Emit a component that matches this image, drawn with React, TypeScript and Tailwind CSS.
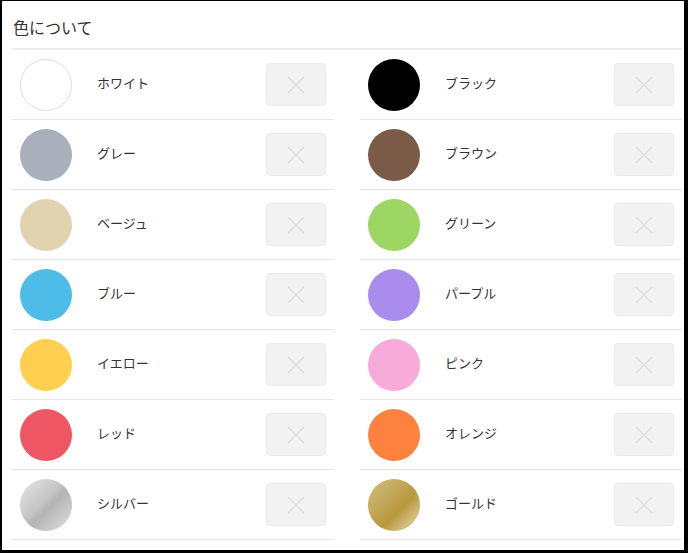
const colors = [
  { name: "ホワイト", swatch: "bg-white border border-[#dddddd]" },
  { name: "ブラック", swatch: "bg-black" },
  { name: "グレー", swatch: "bg-[#a9b0bc]" },
  { name: "ブラウン", swatch: "bg-[#7b5a48]" },
  { name: "ベージュ", swatch: "bg-[#e1d3b0]" },
  { name: "グリーン", swatch: "bg-[#9dd662]" },
  { name: "ブルー", swatch: "bg-[#4dbce9]" },
  { name: "パープル", swatch: "bg-[#a98cee]" },
  { name: "イエロー", swatch: "bg-[#ffd04f]" },
  { name: "ピンク", swatch: "bg-[#f8abd9]" },
  { name: "レッド", swatch: "bg-[#ef5664]" },
  { name: "オレンジ", swatch: "bg-[#fd823f]" },
  {
    name: "シルバー",
    swatch: "bg-[linear-gradient(135deg,#e6e6e6_0%,#c4c4c4_45%,#b3b3b3_55%,#e2e2e2_100%)]",
  },
  {
    name: "ゴールド",
    swatch: "bg-[linear-gradient(135deg,#d3bf7f_0%,#bea250_45%,#b8983c_60%,#ece1be_100%)]",
  },
];

const CloseBox = () => (
  <div className="w-[60px] h-[43px] rounded-[4px] bg-[#f2f2f2] border border-[#ebebeb] flex items-center justify-center">
    <svg width="18" height="18" viewBox="0 0 18 18" fill="none">
      <path d="M1 1L17 17M17 1L1 17" stroke="#dcdcdc" strokeWidth="1.2" />
    </svg>
  </div>
);

export default function App() {
  return (
    <div
      className="w-[688px] h-[553px] bg-white border-black border-t border-l-2 border-r-4 border-b-[3px] pl-[10px] pr-[2px] text-[#333]"
      style={{ fontFamily: '"Noto Sans CJK JP", "Noto Sans", sans-serif' }}
    >
      <div className="h-[47px] flex items-center pl-[1px] pt-[4px] text-[16px]">色について</div>
      <div className="border-t-2 border-[#ececec] grid grid-cols-2 gap-x-[26px]">
        {colors.map((c) => (
          <div
            key={c.name}
            className="h-[70px] border-b border-[#e6e6e6] flex items-center pl-[8px] pr-[8px]"
          >
            <div className={`w-[52px] h-[52px] rounded-full shrink-0 ${c.swatch}`} />
            <div className="ml-[25px] pb-[4px] text-[13px] flex-1">{c.name}</div>
            <CloseBox />
          </div>
        ))}
      </div>
    </div>
  );
}
